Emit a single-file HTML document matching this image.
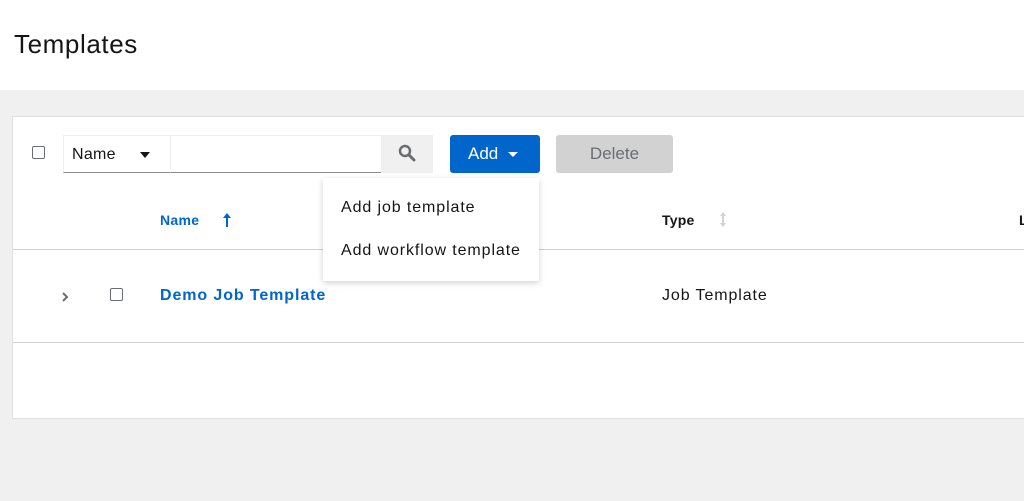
<!DOCTYPE html>
<html><head><style>
*{box-sizing:border-box;margin:0;padding:0}
body{width:1024px;height:501px;background:#f0f0f0;font-family:"Liberation Sans",sans-serif;color:#151515;position:relative;overflow:hidden}
.hdr{position:absolute;left:0;top:0;width:1024px;height:90px;background:#fff}
.hdr h1{position:absolute;left:14px;top:29px;font-size:26px;font-weight:400;letter-spacing:0.6px}
.card{position:absolute;left:12px;top:116px;width:1020px;height:303px;background:#fff;border:1px solid #e0e0e0}
.a{position:absolute}
.cb{width:13px;height:13px;border:1px solid #6a6e73;border-radius:2px;background:#fff}
.line{position:absolute;left:0;width:1020px;height:1px;background:#d2d2d2}
</style></head><body>
<div class="hdr"><h1>Templates</h1></div>
<div class="card">
  <div class="a cb" style="left:19px;top:29px"></div>
  <div class="a" style="left:50px;top:18px;width:108px;height:38px;border:1px solid #f0f0f0;border-bottom:1px solid #8a8d90;font-size:16px;padding:10px 8px;letter-spacing:0.3px">Name<span style="position:absolute;left:76px;top:16px;border-left:5px solid transparent;border-right:5px solid transparent;border-top:6px solid #151515"></span></div>
  <div class="a" style="left:158px;top:18px;width:210px;height:38px;border-top:1px solid #f0f0f0;border-bottom:1px solid #8a8d90"></div>
  <div class="a" style="left:368px;top:18px;width:52px;height:38px;background:#f0f0f0">
    <svg width="18" height="18" viewBox="0 0 18 18" style="position:absolute;left:17px;top:9px"><circle cx="7" cy="7" r="5" fill="none" stroke="#6a6e73" stroke-width="2.5"/><path d="M11 11l5 5" stroke="#6a6e73" stroke-width="3" stroke-linecap="round"/></svg>
  </div>
  <div class="a" style="left:437px;top:18px;width:90px;height:38px;background:#0066cc;border-radius:3px;color:#fff;font-size:17px;padding:9px 0 0 18px">Add<span style="position:absolute;left:58px;top:17px;border-left:5px solid transparent;border-right:5px solid transparent;border-top:5px solid #fff"></span></div>
  <div class="a" style="left:543px;top:18px;width:117px;height:38px;background:#d2d2d2;border-radius:3px;color:#6a6e73;font-size:17px;text-align:center;padding-top:9px">Delete</div>
  <div class="a" style="left:147px;top:95px;font-size:14px;font-weight:700;color:#0066cc;letter-spacing:0.3px">Name</div>
  <svg class="a" style="left:209px;top:95px" width="10" height="16" viewBox="0 0 10 16"><path d="M5 15V3" stroke="#0066cc" stroke-width="2"/><path d="M1 6L5 1 9 6z" fill="#0066cc"/></svg>
  <div class="a" style="left:649px;top:95px;font-size:14px;font-weight:700;letter-spacing:0.2px">Type</div>
  <svg class="a" style="left:705px;top:94px" width="10" height="17" viewBox="0 0 10 17"><path d="M5 3v11" stroke="#d2d2d2" stroke-width="2"/><path d="M2 5L5 1 8 5zM2 12l3 4 3-4z" fill="#d2d2d2"/></svg>
  <div class="a" style="left:1006px;top:95px;font-size:14px;font-weight:700">L</div>
  <div class="line" style="top:132px"></div>
  <svg class="a" style="left:48px;top:174px" width="8" height="12" viewBox="0 0 8 12"><path d="M2 2l4 4-4 4" fill="none" stroke="#6a6e73" stroke-width="2"/></svg>
  <div class="a cb" style="left:97px;top:171px"></div>
  <div class="a" style="left:147px;top:170px;font-size:16px;font-weight:700;color:#0066cc;letter-spacing:0.9px">Demo Job Template</div>
  <div class="a" style="left:649px;top:170px;font-size:16px;letter-spacing:0.9px">Job Template</div>
  <div class="line" style="top:225px"></div>
</div>
<div class="a" style="left:323px;top:178px;width:216px;height:103px;background:#fff;box-shadow:0 2px 6px rgba(3,3,3,.18);font-size:16px;letter-spacing:0.9px">
  <div class="a" style="left:18px;top:21px">Add job template</div>
  <div class="a" style="left:18px;top:64px">Add workflow template</div>
</div>
</body></html>
